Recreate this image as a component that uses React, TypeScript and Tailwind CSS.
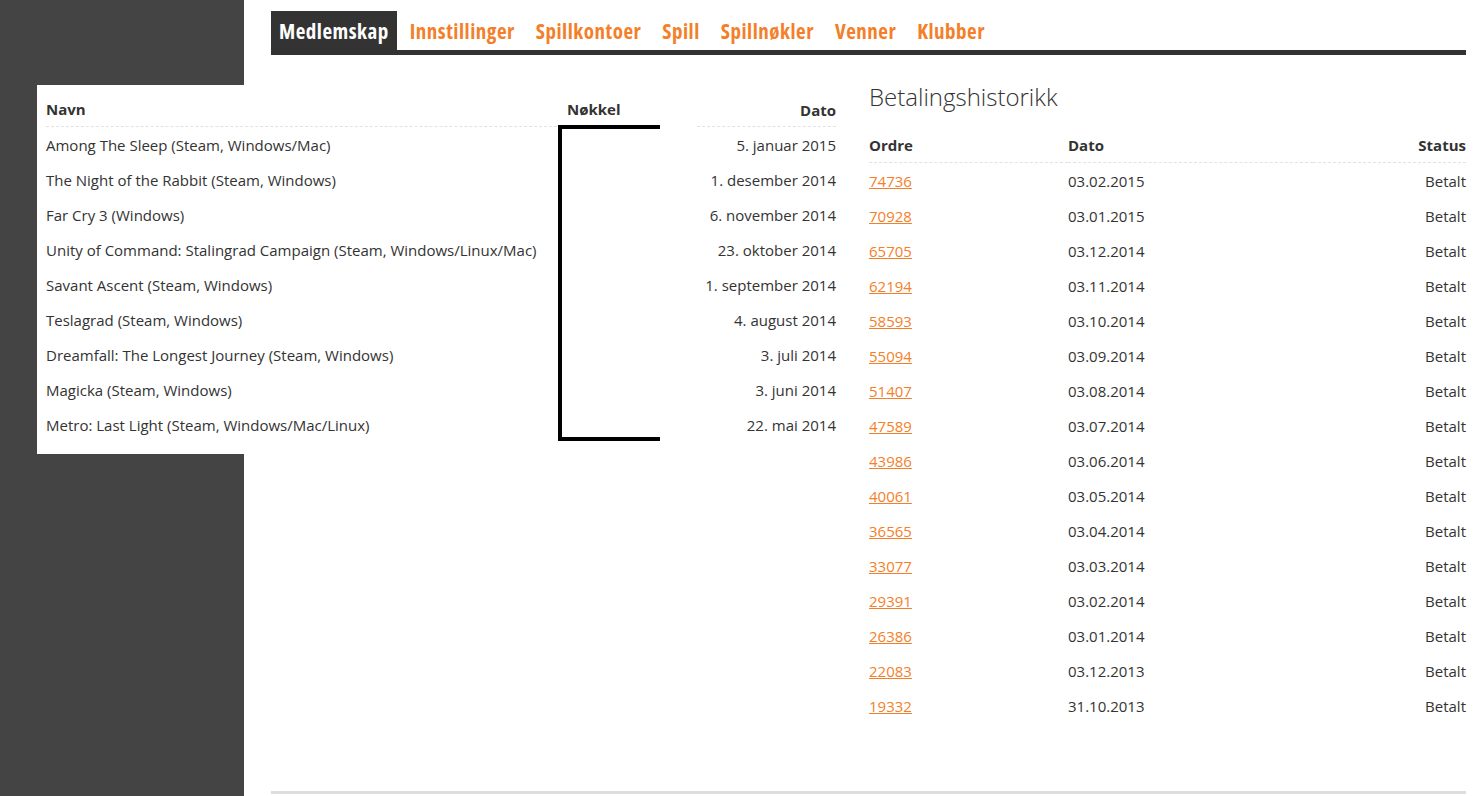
const games = [
  ["Among The Sleep (Steam, Windows/Mac)", "5. januar 2015"],
  ["The Night of the Rabbit (Steam, Windows)", "1. desember 2014"],
  ["Far Cry 3 (Windows)", "6. november 2014"],
  ["Unity of Command: Stalingrad Campaign (Steam, Windows/Linux/Mac)", "23. oktober 2014"],
  ["Savant Ascent (Steam, Windows)", "1. september 2014"],
  ["Teslagrad (Steam, Windows)", "4. august 2014"],
  ["Dreamfall: The Longest Journey (Steam, Windows)", "3. juli 2014"],
  ["Magicka (Steam, Windows)", "3. juni 2014"],
  ["Metro: Last Light (Steam, Windows/Mac/Linux)", "22. mai 2014"],
];

const payments = [
  ["74736", "03.02.2015"],
  ["70928", "03.01.2015"],
  ["65705", "03.12.2014"],
  ["62194", "03.11.2014"],
  ["58593", "03.10.2014"],
  ["55094", "03.09.2014"],
  ["51407", "03.08.2014"],
  ["47589", "03.07.2014"],
  ["43986", "03.06.2014"],
  ["40061", "03.05.2014"],
  ["36565", "03.04.2014"],
  ["33077", "03.03.2014"],
  ["29391", "03.02.2014"],
  ["26386", "03.01.2014"],
  ["22083", "03.12.2013"],
  ["19332", "31.10.2013"],
];

const tabs = ["Medlemskap", "Innstillinger", "Spillkontoer", "Spill", "Spillnøkler", "Venner", "Klubber"];

export default function App() {
  return (
    <div className="flex min-h-screen bg-white text-[15px] leading-[20px] text-[#333] font-['Open_Sans',sans-serif]">
      <aside className="w-[244px] shrink-0 bg-[#444]" />

      <main className="flex min-w-0 flex-1 flex-col pl-[27px] pr-[15px]">
        {/* tabs */}
        <nav className="mt-[11px] flex gap-[5px] border-b-[5px] border-[#333]">
          {tabs.map((t, i) => (
            <a
              key={t}
              href="#"
              className={`flex h-[39px] items-center px-[8px] text-[21px] font-bold tracking-[0.5px] font-stretch-condensed ${
                i === 0 ? "bg-[#333] text-white" : "text-[#f47f2a]"
              }`}
            >
              {t}
            </a>
          ))}
        </nav>

        <div className="flex flex-1 gap-[24px]">
          {/* games */}
          <div className="w-[574px] shrink-0">
            <div className="relative z-10 -ml-[234px] mt-[30px] w-[808px] bg-white pb-[12px] pl-[9px]">
              <table className="w-[790px] border-collapse">
                <thead>
                  <tr>
                    <th className="w-[511px] border-b border-dashed border-[#e2e2e2] pb-[7px] pt-[14px] text-left align-bottom font-bold">
                      Navn
                    </th>
                    <th className="w-[140px] pb-[8px] pl-[10px] text-left align-bottom font-bold">Nøkkel</th>
                    <th className="border-b border-dashed border-[#e2e2e2] pb-[6px] text-right align-bottom font-bold">
                      Dato
                    </th>
                  </tr>
                </thead>
                <tbody>
                  {games.map(([name, date], i) => (
                    <tr key={name}>
                      <td className="h-[35px] p-0 pt-[2px]">{name}</td>
                      {i === 0 && (
                        <td rowSpan={games.length} className="p-0 pl-[1px] align-top">
                          <div className="-mt-[2px] h-[316px] w-[102px] border-y-4 border-l-4 border-black" />
                        </td>
                      )}
                      <td className="h-[35px] p-0 pt-[2px] text-right">{date}</td>
                    </tr>
                  ))}
                </tbody>
              </table>
            </div>
          </div>

          {/* payments */}
          <div className="flex-1 pt-[26px]">
            <h2 className="text-[24px] font-light leading-[32px]">Betalingshistorikk</h2>
            <table className="w-full border-collapse">
              <thead>
                <tr className="border-b border-dashed border-[#e2e2e2]">
                  <th className="w-[199px] pb-[7px] pt-[22px] text-left font-bold">Ordre</th>
                  <th className="pb-[7px] pt-[22px] text-left font-bold">Dato</th>
                  <th className="pb-[7px] pt-[22px] text-right font-bold">Status</th>
                </tr>
              </thead>
              <tbody>
                {payments.map(([id, date]) => (
                  <tr key={id}>
                    <td className="h-[35px] p-0 pt-[2px]">
                      <a href="#" className="text-[#f47f2a] underline">
                        {id}
                      </a>
                    </td>
                    <td className="h-[35px] p-0 pt-[2px]">{date}</td>
                    <td className="h-[35px] p-0 pt-[2px] text-right">Betalt</td>
                  </tr>
                ))}
              </tbody>
            </table>
          </div>
        </div>

        <div className="mb-[2px] h-[3px] bg-[#ddd]" />
      </main>
    </div>
  );
}
